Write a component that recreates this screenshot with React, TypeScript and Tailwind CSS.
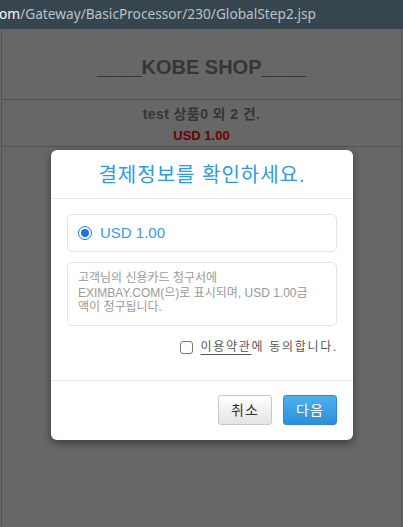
export default function App() {
  return (
    <div className="w-[403px] h-[527px] overflow-hidden bg-[#676767] font-['Liberation_Sans','Noto_Sans_CJK_KR',sans-serif] relative">
      {/* address bar */}
      <div className="h-[30px] bg-[#37454e] border-b border-[#5b6a72] flex items-center whitespace-nowrap text-[13.7px] font-['Noto_Sans','Noto_Sans_CJK_KR',sans-serif]">
        <span className="text-white ml-[-1px]">om</span>
        <span className="text-[#b9c3c9]">/Gateway/BasicProcessor/230/GlobalStep2.jsp</span>
      </div>

      {/* page behind the overlay */}
      <div className="mx-[1px] h-[497px] border-x border-[#555]">
        <div className="h-[70px] flex items-center justify-center border-b border-[#555]">
          <h1 className="text-[20px] font-bold text-[#363636] pt-[4px]">____KOBE SHOP____</h1>
        </div>
        <div className="h-[47px] flex flex-col items-center justify-center border-b border-[#555] gap-[5px] pt-[2px]">
          <p className="text-[14px] font-bold text-[#363636] leading-[18px] tracking-[0.4px]">test 상품0 외 2 건.</p>
          <p className="text-[13px] font-bold text-[#6e0000] leading-[16px]">USD 1.00</p>
        </div>
      </div>

      {/* modal */}
      <div className="absolute left-[51px] top-[150px] w-[302px] bg-white rounded-[6px] shadow-[0_3px_8px_rgba(0,0,0,0.45)] font-['Liberation_Sans','Noto_Sans_CJK_KR',sans-serif]">
        <div className="h-[49px] flex items-center justify-center border-b border-[#e5e5e5]">
          <h2 className="text-[20px] text-[#2d9be3] tracking-[1px] pt-[1px]">결제정보를 확인하세요.</h2>
        </div>
        <div className="px-[16px] pt-[15px] pb-[24px]">
          <label className="h-[38px] border border-[#e3e3e3] rounded-[5px] flex items-center px-[10px] gap-[8px]">
            <span className="w-[14px] h-[14px] rounded-full border-[1.5px] border-[#1a73e8] flex items-center justify-center">
              <span className="w-[8px] h-[8px] rounded-full bg-[#1a73e8]" />
            </span>
            <span className="text-[15px] text-[#3a9be4]">USD 1.00</span>
          </label>
          <div className="mt-[10px] h-[64px] border border-[#e3e3e3] rounded-[5px] px-[10px] pt-[8px] text-[12px] leading-[14.5px] text-[#9a9a9a] whitespace-nowrap">
            고객님의 신용카드 청구서에
            <br />
            EXIMBAY.COM(으)로 표시되며, USD 1.00금
            <br />
            액이 청구됩니다.
          </div>
          <div className="mt-[12px] flex items-center justify-end gap-[8px] text-[12px] text-[#555] tracking-[1.7px]">
            <span className="w-[13px] h-[13px] rounded-[3px] border border-[#777]" />
            <span className="mr-[-1px]">
              <span className="underline underline-offset-[3px]">이용약관</span>에 동의합니다.
            </span>
          </div>
        </div>
        <div className="border-t border-[#e5e5e5] px-[16px] pt-[14px] pb-[15px] flex justify-end gap-[11px]">
          <button className="w-[54px] h-[30px] rounded-[3px] border border-[#c8c8c8] bg-gradient-to-b from-white to-[#e4e4e4] text-[14px] text-[#333] tracking-[1px]">
            취소
          </button>
          <button className="w-[54px] h-[30px] rounded-[3px] border border-[#2a8ad4] bg-gradient-to-b from-[#4fb0ee] to-[#2a8fdb] text-[14px] text-white tracking-[1px]">
            다음
          </button>
        </div>
      </div>
    </div>
  );
}
